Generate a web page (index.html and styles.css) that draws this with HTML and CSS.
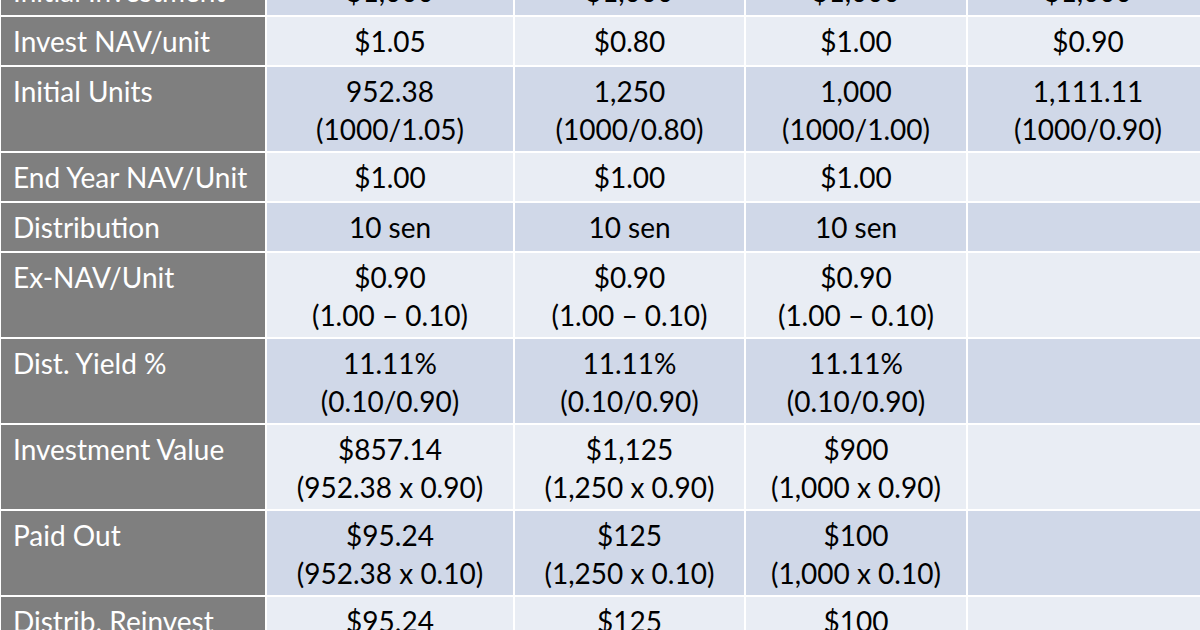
FILE: index.html
```html
<!DOCTYPE html>
<html>
<head>
<meta charset="utf-8">
<link rel="stylesheet" href="styles.css">
</head>
<body>
<div class="table">
  <div class="row single dark">
    <div class="lbl">Initial Investment</div>
    <div class="cell">$1,000</div>
    <div class="cell">$1,000</div>
    <div class="cell">$1,000</div>
    <div class="cell">$1,000</div>
  </div>
  <div class="row single light">
    <div class="lbl">Invest NAV/unit</div>
    <div class="cell">$1.05</div>
    <div class="cell">$0.80</div>
    <div class="cell">$1.00</div>
    <div class="cell">$0.90</div>
  </div>
  <div class="row double dark">
    <div class="lbl">Initial Units</div>
    <div class="cell">952.38<br>(1000/1.05)</div>
    <div class="cell">1,250<br>(1000/0.80)</div>
    <div class="cell">1,000<br>(1000/1.00)</div>
    <div class="cell">1,111.11<br>(1000/0.90)</div>
  </div>
  <div class="row single light">
    <div class="lbl">End Year NAV/Unit</div>
    <div class="cell">$1.00</div>
    <div class="cell">$1.00</div>
    <div class="cell">$1.00</div>
    <div class="cell"></div>
  </div>
  <div class="row single dark">
    <div class="lbl">Distribution</div>
    <div class="cell">10 sen</div>
    <div class="cell">10 sen</div>
    <div class="cell">10 sen</div>
    <div class="cell"></div>
  </div>
  <div class="row double light">
    <div class="lbl">Ex-NAV/Unit</div>
    <div class="cell">$0.90<br>(1.00 – 0.10)</div>
    <div class="cell">$0.90<br>(1.00 – 0.10)</div>
    <div class="cell">$0.90<br>(1.00 – 0.10)</div>
    <div class="cell"></div>
  </div>
  <div class="row double dark">
    <div class="lbl">Dist. Yield %</div>
    <div class="cell">11.11%<br>(0.10/0.90)</div>
    <div class="cell">11.11%<br>(0.10/0.90)</div>
    <div class="cell">11.11%<br>(0.10/0.90)</div>
    <div class="cell"></div>
  </div>
  <div class="row double light">
    <div class="lbl">Investment Value</div>
    <div class="cell">$857.14<br>(952.38 x 0.90)</div>
    <div class="cell">$1,125<br>(1,250 x 0.90)</div>
    <div class="cell">$900<br>(1,000 x 0.90)</div>
    <div class="cell"></div>
  </div>
  <div class="row double dark">
    <div class="lbl">Paid Out</div>
    <div class="cell">$95.24<br>(952.38 x 0.10)</div>
    <div class="cell">$125<br>(1,250 x 0.10)</div>
    <div class="cell">$100<br>(1,000 x 0.10)</div>
    <div class="cell"></div>
  </div>
  <div class="row double light">
    <div class="lbl">Distrib. Reinvest</div>
    <div class="cell">$95.24</div>
    <div class="cell">$125</div>
    <div class="cell">$100</div>
    <div class="cell"></div>
  </div>
</div>
</body>
</html>
```

FILE: styles.css
```css
html, body {
  margin: 0;
  padding: 0;
  background: #ffffff;
  overflow: hidden;
}

body {
  width: 1200px;
  height: 630px;
  font-family: "Lato", "Open Sans", sans-serif;
  font-size: 28px;
  color: #000000;
}

.table {
  display: flex;
  flex-direction: column;
  gap: 2px;
  margin-top: -33px;
  padding-left: 1px;
  background: #ffffff;
}

.row {
  display: grid;
  grid-template-columns: 264px 246px 229px 220px 240px;
  column-gap: 2px;
}

.row.single { height: 48px; }
.row.double { height: 84px; }

.lbl,
.cell {
  padding-top: 5px;
  line-height: 38px;
  white-space: nowrap;
}

.lbl {
  background: #7f7f7f;
  color: #ffffff;
  padding-left: 12px;
}

.cell {
  text-align: center;
}

.row.dark .cell { background: #d0d8e8; }
.row.light .cell { background: #e9edf4; }
```
